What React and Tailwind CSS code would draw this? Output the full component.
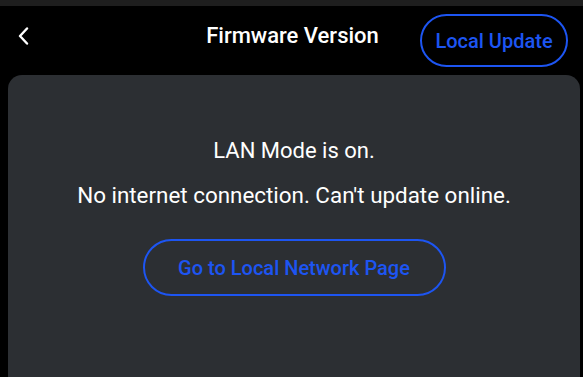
import React from 'react';

const App = () => {
    return (
        <div className="w-[583px] h-[377px] bg-black overflow-hidden flex flex-col font-['Roboto',_'Liberation_Sans',_sans-serif]">
            <div className="h-[6px] bg-[#1e1e1e] shrink-0" />
            {/* Header */}
            <div className="h-[69px] shrink-0 relative flex items-center justify-center">
                <button className="absolute left-[14px] top-[18px] w-[18px] h-[24px] flex items-center justify-center">
                    <svg width="12" height="18" viewBox="0 0 12 18" fill="none">
                        <path d="M10 1.5L3 9L10 16.5" stroke="#ffffff" strokeWidth="2.4" strokeLinecap="round" strokeLinejoin="round" />
                    </svg>
                </button>
                <h1 className="text-white text-[22px] font-medium -mt-[10px] ml-[2px]">Firmware Version</h1>
                <button className="absolute left-[420px] top-[8px] w-[148px] h-[53px] rounded-full border-2 border-[#1d55f2] text-[#1d55f2] text-[20px] font-medium">
                    Local Update
                </button>
            </div>
            {/* Card */}
            <div className="ml-[8px] mr-[3px] flex-1 bg-[#2c2f33] rounded-t-[14px] flex flex-col items-center pt-[61px]">
                <p className="text-white text-[22px] leading-[30px]">LAN Mode is on.</p>
                <p className="text-white text-[22.4px] leading-[30px] mt-[14px]">No internet connection. Can't update online.</p>
                <button className="mt-[29px] w-[303px] h-[57px] rounded-full border-2 border-[#1d55f2] text-[#1d55f2] text-[20px] font-medium">
                    Go to Local Network Page
                </button>
            </div>
        </div>
    );
};

export default App;
